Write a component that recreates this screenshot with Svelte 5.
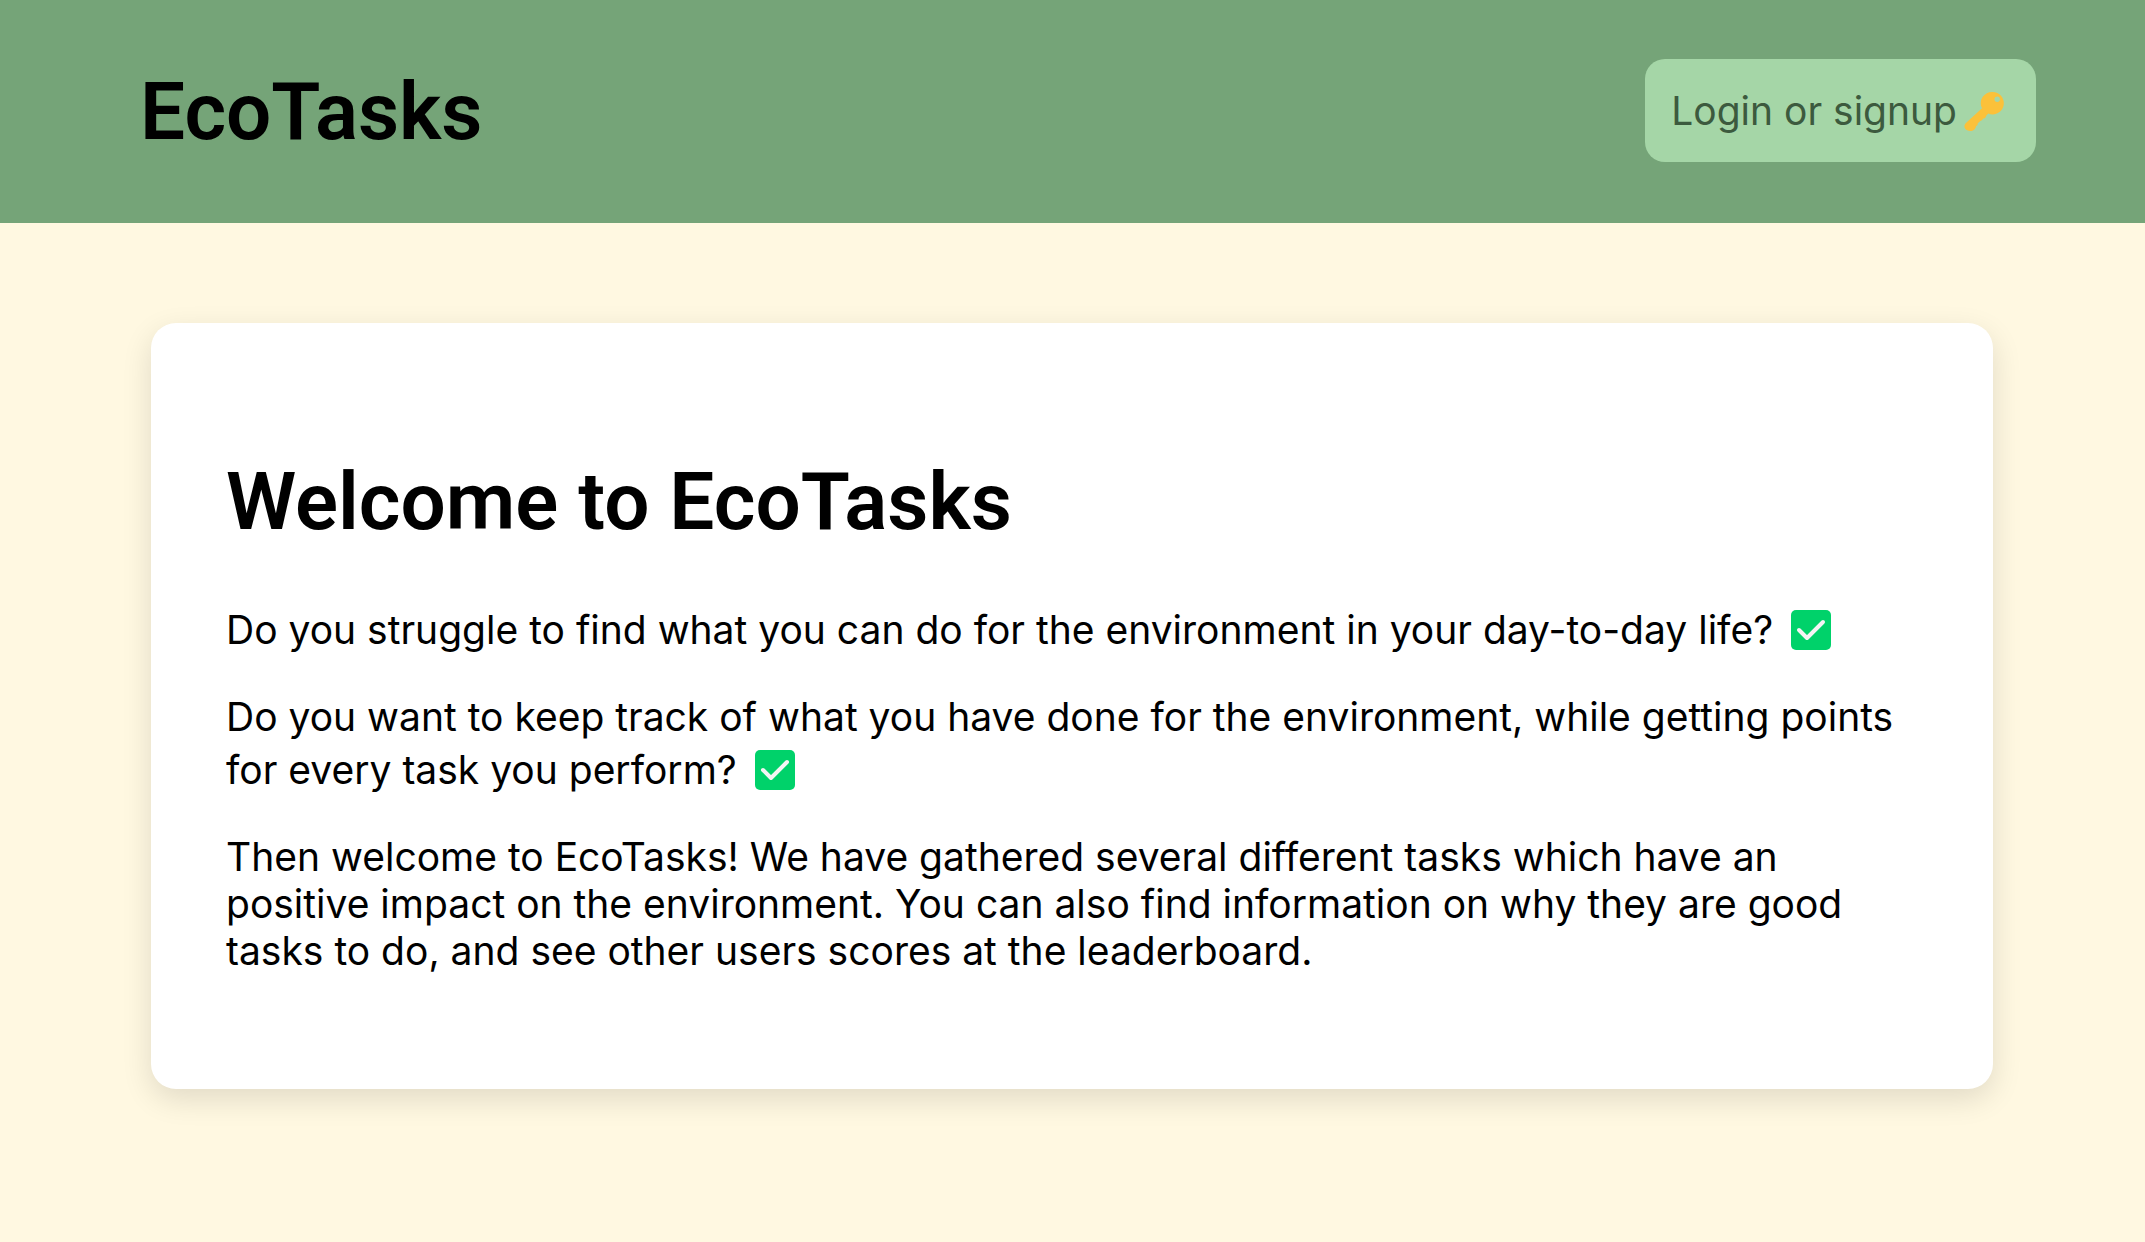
<script>
  const lines = [
    {
      text: 'Do you struggle to find what you can do for the environment in your day-to-day life?',
      checked: true
    },
    {
      text: 'Do you want to keep track of what you have done for the environment, while getting points for every task you perform?',
      checked: true
    },
    {
      text: 'Then welcome to EcoTasks! We have gathered several different tasks which have an positive impact on the environment. You can also find information on why they are good tasks to do, and see other users scores at the leaderboard.',
      checked: false
    }
  ];
</script>

<header>
  <h1>EcoTasks</h1>
  <button type="button">
    <span>Login or signup</span>
    <svg class="key" viewBox="0 0 40 40" aria-hidden="true">
      <path
        fill="#fbc13a"
        fill-rule="evenodd"
        d="M28.500 1a11.200 11.200 0 1 1-4.300 21.500l-2 2.200c-.3 1.700-1.200 2.900-3.200 2.900-.4 1.400-1.400 2.200-2.700 2.300l-2.700 2.700c.3 1.100-.2 2.100-1.500 2.400C11.700 38 9.300 40 6.200 40 2.200 40 0 37.200.5 34.600c.2-1.200.8-2 1.700-2.900L18 17.300A11.200 11.200 0 0 1 28.500 1Zm4.700 4.600a2.700 2.700 0 1 0 .01 5.400 2.700 2.700 0 0 0-.01-5.400Z"
      />
    </svg>
  </button>
</header>

<main>
  <section>
    <h1>Welcome to EcoTasks</h1>
    {#each lines as line}
      <p>
        {line.text}
        {#if line.checked}
          <svg class="check" viewBox="0 0 40 40" aria-hidden="true">
            <rect width="40" height="40" rx="5" fill="#00d26a" />
            <path
              d="M8 20l8 8L32 12"
              fill="none"
              stroke="#f4f4f4"
              stroke-width="4"
              stroke-linecap="round"
              stroke-linejoin="round"
            />
          </svg>
        {/if}
      </p>
    {/each}
  </section>
</main>

<style>
  :global(body) {
    background: #fff8e1;
    color: #000;
    font-family: Inter, 'Liberation Sans', sans-serif;
    font-size: 39px;
    line-height: 47px;
  }

  h1 {
    margin: 0;
    padding-top: 4px;
    font-family: Roboto, Inter, sans-serif;
    font-size: 80px;
    font-weight: 600;
    line-height: 95px;
  }

  header {
    display: flex;
    align-items: center;
    justify-content: space-between;
    padding: 59px 109px 61px 140px;
    background: #75a478;
  }

  button {
    display: flex;
    align-items: center;
    gap: 7px;
    padding: 28px 32px 28px 26px;
    border: 0;
    border-radius: 20px;
    background: #a5d6a7;
    color: #3c5a3e;
    font: inherit;
    cursor: pointer;
  }

  .key {
    width: 40px;
    height: 40px;
  }

  main {
    padding: 100px 152px 152px 151px;
  }

  section {
    padding: 128px 75px 115px;
    border-radius: 25px;
    background: #fff;
    box-shadow: 0 10px 30px rgba(0, 0, 0, 0.12);
  }

  section h1 {
    margin-bottom: 50px;
  }

  p {
    margin: 0;
  }

  p + p {
    margin-top: 40px;
  }

  .check {
    display: inline-block;
    width: 40px;
    height: 40px;
    margin: 10px 0 0 7px;
    vertical-align: -6px;
  }
</style>
